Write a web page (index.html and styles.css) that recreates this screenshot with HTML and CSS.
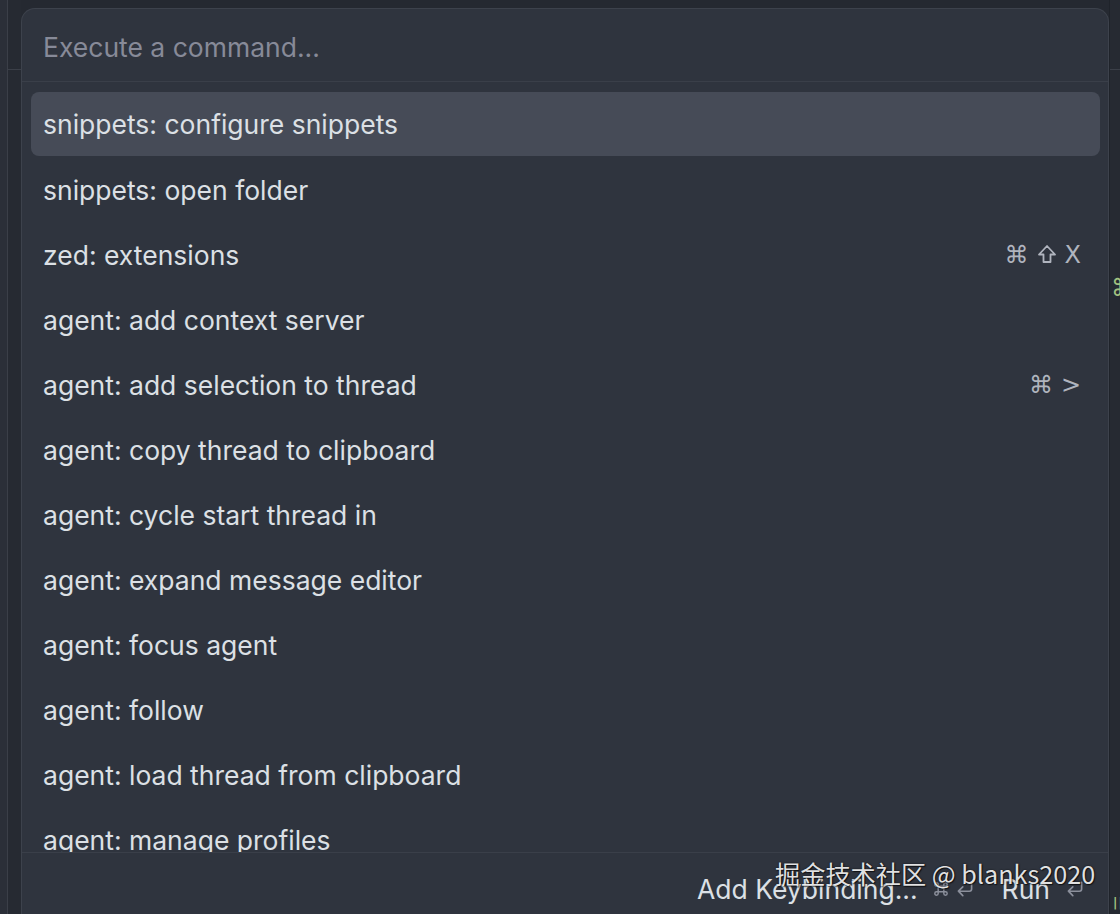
FILE: index.html
```html
<!DOCTYPE html>
<html lang="en">
<head>
<meta charset="utf-8">
<title>Command Palette</title>
<link rel="stylesheet" href="styles.css">
</head>
<body>
<div class="workspace">
  <div class="side-left">
    <div class="rail"></div>
    <div class="gutter"><div class="gutter-top"></div></div>
  </div>
  <div class="palette">
    <div class="query">Execute a command...</div>
    <div class="list">
      <div class="row selected"><span>snippets: configure snippets</span></div>
      <div class="row"><span>snippets: open folder</span></div>
      <div class="row"><span>zed: extensions</span><span class="keys"><span>⌘</span><svg class="shift" width="20" height="22" viewBox="0 0 20 22" fill="none" stroke="currentColor" stroke-width="1.8" stroke-linejoin="round"><path d="M10 3 L18 11.5 H13.5 V19 H6.5 V11.5 H2 Z"/></svg><span>X</span></span></div>
      <div class="row"><span>agent: add context server</span></div>
      <div class="row"><span>agent: add selection to thread</span><span class="keys"><span>⌘</span><span>&gt;</span></span></div>
      <div class="row"><span>agent: copy thread to clipboard</span></div>
      <div class="row"><span>agent: cycle start thread in</span></div>
      <div class="row"><span>agent: expand message editor</span></div>
      <div class="row"><span>agent: focus agent</span></div>
      <div class="row"><span>agent: follow</span></div>
      <div class="row"><span>agent: load thread from clipboard</span></div>
      <div class="row"><span>agent: manage profiles</span></div>
    </div>
    <div class="footer">
      <span class="action">Add Keybinding...</span>
      <span class="fkeys">
        <svg width="18" height="18" viewBox="0 0 16 16" fill="none" stroke="currentColor" stroke-width="1.3"><path d="M5.5 5.5v5M10.5 5.5v5M5.5 5.5h5M5.5 10.5h5M5.5 5.5H4a1.5 1.5 0 1 1 1.5-1.5v1.5M10.5 5.5V4A1.5 1.5 0 1 1 12 5.5h-1.5M10.5 10.5H12a1.5 1.5 0 1 1-1.5 1.5v-1.5M5.5 10.5V12A1.5 1.5 0 1 1 4 10.5h1.5"/></svg>
        <svg width="22" height="20" viewBox="0 0 20 18" fill="none" stroke="currentColor" stroke-width="1.5" stroke-linecap="round" stroke-linejoin="round"><path d="M16 3v6a2 2 0 0 1-2 2H4M8 7l-4 4 4 4"/></svg>
      </span>
      <span class="action run">Run</span>
      <span class="fkeys">
        <svg width="22" height="20" viewBox="0 0 20 18" fill="none" stroke="currentColor" stroke-width="1.5" stroke-linecap="round" stroke-linejoin="round"><path d="M16 3v6a2 2 0 0 1-2 2H4M8 7l-4 4 4 4"/></svg>
      </span>
    </div>
  </div>
  <div class="side-right">
    <div class="gutter-top"></div>
    <div class="code code-a">⌘</div>
    <div class="code code-b">||</div>
  </div>
  <div class="watermark">掘金技术社区 @ blanks2020</div>
</div>
</body>
</html>
```

FILE: styles.css
```css
* { box-sizing: border-box; }
html, body {
  margin: 0;
  height: 100%;
  overflow: hidden;
  background: #252931;
}
body {
  font-family: "Inter", "Noto Sans", sans-serif;
  color: #dce0e5;
}
.workspace {
  position: relative;
  display: flex;
  height: 914px;
  width: 1120px;
}
.side-left {
  display: flex;
  width: 21px;
  flex: none;
}
.rail {
  width: 8px;
  background: #2b2f38;
  border-right: 1px solid #3b3f48;
}
.gutter {
  flex: 1;
  background: #262a32;
}
.gutter-top {
  height: 70px;
  border-bottom: 1px solid #3b3f48;
}
.side-right {
  position: relative;
  flex: 1;
  background: #262a32;
  border-left: 1px solid #1f232a;
  overflow: hidden;
}
.code {
  position: absolute;
  color: #a1c181;
  font-family: "DejaVu Sans", sans-serif;
}
.code-a { left: 1px; top: 274px; font-size: 24px; }
.code-b { left: 3px; top: 896px; font-size: 12px; font-weight: bold; letter-spacing: 1px; }

.palette {
  width: 1088px;
  flex: none;
  margin-top: 8px;
  height: 930px;
  background: #2f343e;
  border: 1px solid #3d424c;
  border-bottom: none;
  border-radius: 14px 14px 0 0;
  display: flex;
  flex-direction: column;
  overflow: hidden;
}
.query {
  height: 73px;
  flex: none;
  padding: 4px 21px 0;
  display: flex;
  align-items: center;
  font-size: 26.5px;
  color: #878a98;
  border-bottom: 1px solid #3a3f49;
}
.list {
  height: 770px;
  flex: none;
  padding: 10px 8px 0 9px;
  overflow: hidden;
}
.row {
  height: 65px;
  padding: 0 19px 0 12px;
  display: flex;
  align-items: center;
  justify-content: space-between;
  font-size: 26.5px;
  color: #dce0e5;
  border-radius: 8px;
  white-space: nowrap;
}
.row.selected {
  background: #464b57;
  height: 64px;
  margin-bottom: 1px;
}
.keys {
  display: flex;
  align-items: center;
  gap: 8px;
  color: #b0b4be;
  font-family: "DejaVu Sans", sans-serif;
  font-size: 24px;
}
.shift { margin-top: -2px; }
.footer {
  flex: 1;
  border-top: 1px solid #3a3f49;
  display: flex;
  align-items: flex-start;
  justify-content: flex-end;
  padding: 20px 22px 0 0;
  gap: 14px;
}
.action {
  font-size: 26.5px;
  line-height: 32px;
  color: #dce0e5;
}
.action.run { margin-left: 12px; }
.fkeys {
  display: flex;
  align-items: center;
  gap: 4px;
  height: 32px;
  color: #8b8f9b;
}
.watermark {
  position: absolute;
  left: 775px;
  top: 855px;
  font-family: "Noto Sans CJK SC", "Noto Sans", sans-serif;
  font-size: 25.2px;
  color: rgba(255, 255, 255, 0.88);
  text-shadow: 0 0 2px rgba(0, 0, 0, 0.7), 1px 1px 1px rgba(0, 0, 0, 0.6);
  white-space: nowrap;
}
```
